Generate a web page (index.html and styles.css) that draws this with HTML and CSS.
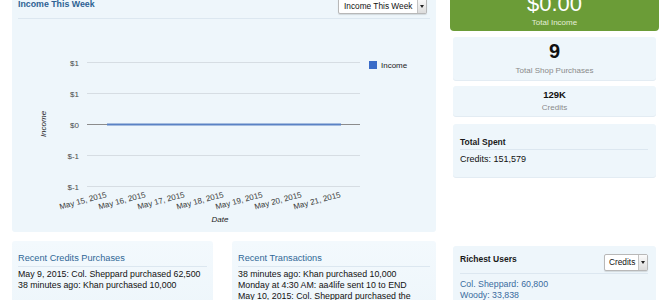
FILE: index.html
```html
<!DOCTYPE html>
<html>
<head>
<meta charset="utf-8">
<link rel="stylesheet" href="styles.css">
</head>
<body>
<div class="page">
  <div class="main">
    <div class="panel chart-panel">
      <div class="panel-head">
        <div class="head-title">Income This Week</div>
        <div class="fake-select wide"><span class="sel-text">Income This Week</span><span class="sel-btn"><i></i></span></div>
      </div>
      <svg class="chart" width="424" height="213" viewBox="0 0 424 213">
        <g stroke="#d6dde3" stroke-width="1">
          <line x1="75" y1="43.5" x2="348" y2="43.5"/>
          <line x1="75" y1="74.5" x2="348" y2="74.5"/>
          <line x1="75" y1="136.5" x2="348" y2="136.5"/>
          <line x1="75" y1="167.5" x2="348" y2="167.5"/>
        </g>
        <line x1="75" y1="105.5" x2="348" y2="105.5" stroke="#8c8c8c" stroke-width="1"/>
        <line x1="95" y1="105.5" x2="329" y2="105.5" stroke="#5a82c4" stroke-width="2"/>
        <g class="ylab" text-anchor="end">
          <text x="67" y="46.5">$1</text>
          <text x="67" y="77.5">$1</text>
          <text x="67" y="108.5">$0</text>
          <text x="67" y="139.5">$-1</text>
          <text x="67" y="170.5">$-1</text>
        </g>
        <text class="axis-title" x="0" y="0" text-anchor="middle" transform="translate(34 105) rotate(-90)">Income</text>
        <rect x="357" y="42" width="8" height="8" fill="#3a6cc8"/>
        <text class="legend" x="369" y="49">Income</text>
        <g class="xlab" text-anchor="end">
          <text x="95" y="178" transform="rotate(-15 95 178)">May 15, 2015</text>
          <text x="134" y="178" transform="rotate(-15 134 178)">May 16, 2015</text>
          <text x="173" y="178" transform="rotate(-15 173 178)">May 17, 2015</text>
          <text x="212" y="178" transform="rotate(-15 212 178)">May 18, 2015</text>
          <text x="251" y="178" transform="rotate(-15 251 178)">May 19, 2015</text>
          <text x="290" y="178" transform="rotate(-15 290 178)">May 20, 2015</text>
          <text x="329" y="178" transform="rotate(-15 329 178)">May 21, 2015</text>
        </g>
        <text class="axis-title" x="208" y="203" text-anchor="middle">Date</text>
      </svg>
    </div>
    <div class="lower">
      <div class="panel block">
        <div class="block-title blue">Recent Credits Purchases</div>
        <ul class="lines">
          <li>May 9, 2015: Col. Sheppard purchased 62,500</li>
          <li>38 minutes ago: Khan purchased 10,000</li>
        </ul>
      </div>
      <div class="panel block">
        <div class="block-title blue">Recent Transactions</div>
        <ul class="lines">
          <li>38 minutes ago: Khan purchased 10,000</li>
          <li>Monday at 4:30 AM: aa4life sent 10 to END</li>
          <li>May 10, 2015: Col. Sheppard purchased the</li>
        </ul>
      </div>
    </div>
  </div>
  <div class="side">
    <div class="stat green">
      <div class="stat-big">$0.00</div>
      <div class="stat-label light">Total Income</div>
    </div>
    <div class="stat box purchases">
      <div class="stat-num">9</div>
      <div class="stat-label">Total Shop Purchases</div>
    </div>
    <div class="stat box credits">
      <div class="stat-small">129K</div>
      <div class="stat-label">Credits</div>
    </div>
    <div class="box spent">
      <div class="block-title dark">Total Spent</div>
      <div class="spent-value">Credits: 151,579</div>
    </div>
    <div class="box rich">
      <div class="rich-head">
        <div class="block-title dark plain">Richest Users</div>
        <div class="fake-select narrow"><span class="sel-text">Credits</span><span class="sel-btn"><i></i></span></div>
      </div>
      <ul class="lines links">
        <li>Col. Sheppard: 60,800</li>
        <li>Woody: 33,838</li>
      </ul>
    </div>
  </div>
</div>
</body>
</html>
```
FILE: styles.css
```css
* { box-sizing: border-box; }
html, body { margin: 0; padding: 0; background: #ffffff; }
body {
  font-family: "Liberation Sans", Arial, sans-serif;
  font-size: 9px;
  color: #111111;
  overflow: hidden;
}
.page {
  display: grid;
  grid-template-columns: 424px 209px;
  column-gap: 14px;
  padding-left: 12px;
  margin-top: -10px;
  align-items: start;
}
.panel {
  background: #eef6fb;
  border-radius: 3px;
}
.chart-panel {
  padding-top: 8px;
}
.panel-head {
  margin: 0 6px;
  display: flex;
  justify-content: space-between;
  padding-bottom: 4px;
  border-bottom: 1px solid #dce7f0;
}
.head-title {
  font-weight: bold;
  font-size: 8.8px;
  line-height: 12px;
  color: #2d6293;
}
.fake-select {
  display: flex;
  height: 16px;
  background: #fff;
  border: 1px solid #b8b8b8;
  border-radius: 2px;
  box-shadow: 0 1px 1px rgba(0,0,0,0.12);
}
.fake-select.wide { width: 89px; margin-right: 3px; }
.fake-select.narrow { width: 44px; height: 17px; margin-top: 1px; }
.sel-text {
  flex: 1;
  font-size: 8.3px;
  line-height: 14px;
  padding-left: 5px;
  color: #111;
  white-space: nowrap;
}
.narrow .sel-text { line-height: 15px; padding-left: 4px; }
.sel-btn {
  width: 9px;
  border-left: 1px solid #c4c4c4;
  background: linear-gradient(#fbfbfb, #dcdcdc);
  display: flex;
  align-items: center;
  justify-content: center;
}
.sel-btn i {
  display: block;
  width: 0;
  height: 0;
  border-left: 2px solid transparent;
  border-right: 2px solid transparent;
  border-top: 3px solid #222;
}
.chart { display: block; }
.chart text { font-family: "Liberation Sans", Arial, sans-serif; }
.ylab text { font-size: 8px; fill: #4a4a4a; }
.xlab text { font-size: 8px; fill: #3a3a3a; }
.axis-title { font-size: 8px; font-style: italic; fill: #222; }
.legend { font-size: 8px; fill: #222; }

.lower {
  display: grid;
  grid-template-columns: 201px 204px;
  column-gap: 19px;
  margin-top: 9px;
}
.block {
  padding: 11px 6px 6px;
  background: linear-gradient(#f3f9fd, #eef6fb);
}
.block-title {
  font-size: 9.2px;
  line-height: 12px;
  padding-bottom: 2px;
  border-bottom: 1px solid #dce7f0;
}
.block-title.blue { color: #2f6796; }
.block-title.dark { color: #1a1a1a; font-weight: bold; font-size: 8.5px; }
.lines {
  list-style: none;
  margin: 2px 0 0;
  padding: 0;
}
.lines li {
  font-size: 8.8px;
  line-height: 11px;
  white-space: nowrap;
}

.side {
  display: flex;
  flex-direction: column;
}
.stat { text-align: center; }
.green {
  background: #6b9c37;
  border-radius: 0 0 4px 4px;
  padding: 3px 0 3px;
}
.stat-big {
  font-size: 22px;
  line-height: 22px;
  color: #ffffff;
}
.stat-label {
  font-size: 8px;
  line-height: 10px;
  color: #8a8a8a;
}
.stat-label.light { color: #e4eed8; margin-top: 3px; }
.box {
  background: #eef6fb;
  margin: 0 3px;
  border-radius: 3px;
  box-shadow: 0 1px 0 #e3ecf3;
}
.purchases {
  margin-top: 6px;
  padding: 4px 0 4px;
}
.stat-num {
  font-size: 20px;
  line-height: 20px;
  font-weight: bold;
  color: #111;
}
.purchases .stat-label { margin-top: 5px; }
.credits {
  margin-top: 6px;
  padding: 3px 0 3px;
}
.stat-small {
  font-size: 9.5px;
  line-height: 12px;
  font-weight: bold;
  color: #111;
}
.credits .stat-label { margin-top: 2px; }
.spent {
  margin-top: 8px;
  padding: 12px 8px 12px 7px;
}
.spent .block-title { padding-bottom: 1px; }
.spent-value {
  margin-top: 3px;
  line-height: 12px;
}
.rich {
  margin-top: 69px;
  padding: 7px 8px 4px 7px;
}
.rich-head {
  display: flex;
  justify-content: space-between;
  align-items: flex-start;
  padding-bottom: 2px;
  border-bottom: 1px solid #dce7f0;
}
.block-title.plain { border-bottom: none; padding-bottom: 0; }
.links { margin-top: 5px; }
.links li { color: #3a6c9e; }
```
